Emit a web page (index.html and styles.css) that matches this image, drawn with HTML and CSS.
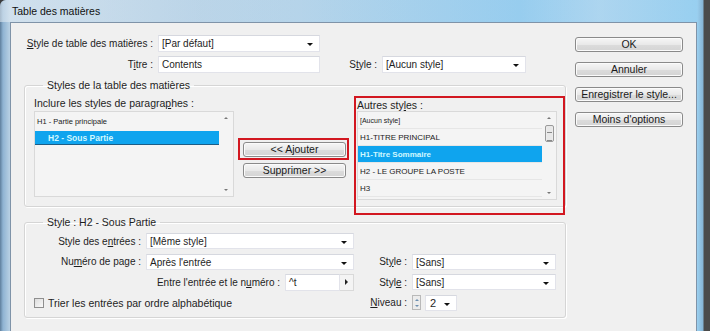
FILE: index.html
```html
<!doctype html>
<html lang="fr">
<head>
	<meta charset="UTF-8">
	<title>Table des matières</title>
	<link rel="stylesheet" href="styles.css">
</head>
<body>
<div class="window">
	<div class="titlebar">Table des matières</div>
	<div class="client">
		<div class="main">
			<div class="row">
				<label class="lbl w-first"><u>S</u>tyle de table des matières :</label>
				<div class="select w-top">[Par défaut]<i class="arrow"></i></div>
			</div>
			<div class="row">
				<label class="lbl w-first">T<u>i</u>tre :</label>
				<div class="input w-top">Contents</div>
				<label class="lbl w-style">S<u>t</u>yle :</label>
				<div class="select w-style-sel">[Aucun style]<i class="arrow"></i></div>
			</div>

			<fieldset class="group group-one">
				<legend>Styles de la table des matières</legend>
				<div class="cols">
					<div class="col-left">
						<div class="caption">Inclure les styles de paragra<u>p</u>hes :</div>
						<div class="listbox left-list">
							<ul>
								<li>H1 - Partie principale</li>
								<li class="sel indent">H2 - Sous Partie</li>
							</ul>
							<div class="scroll">
								<span class="up"></span>
								<span class="down"></span>
							</div>
						</div>
					</div>
					<div class="col-mid">
						<div class="redbox add-box">
							<a href="javascript:;" class="btn">&lt;&lt; Ajouter</a>
						</div>
						<a href="javascript:;" class="btn">Supprimer &gt;&gt;</a>
					</div>
					<div class="redbox col-right">
						<div class="caption">Autres sty<u>l</u>es :</div>
						<div class="listbox right-list">
							<ul>
								<li class="tiny">[Aucun style]</li>
								<li>H1-TITRE PRINCIPAL</li>
								<li class="sel">H1-Titre Sommaire</li>
								<li>H2 - LE GROUPE LA POSTE</li>
								<li>H3</li>
							</ul>
							<div class="scroll">
								<span class="up"></span>
								<span class="thumb"></span>
								<span class="down"></span>
							</div>
						</div>
					</div>
				</div>
			</fieldset>

			<fieldset class="group group-two">
				<legend>Style : H2 - Sous Partie</legend>
				<div class="grid">
					<label class="lbl">Style des e<u>n</u>trées :</label>
					<div class="select">[Même style]<i class="arrow"></i></div>
					<span></span>
					<span></span>

					<label class="lbl">Nu<u>m</u>éro de page :</label>
					<div class="select">Après l'entrée<i class="arrow"></i></div>
					<label class="lbl">St<u>y</u>le :</label>
					<div class="select">[Sans]<i class="arrow"></i></div>

					<div class="between">
						<label class="lbl">Entre l'entrée et le n<u>u</u>méro :</label>
						<div class="input sep">^t</div>
						<a href="javascript:;" class="flyout"><i></i></a>
					</div>
					<label class="lbl">Styl<u>e</u> :</label>
					<div class="select">[Sans]<i class="arrow"></i></div>

					<div class="check">
						<span class="box"></span>Trier les entrées par ordre alphabétique
					</div>
					<label class="lbl"><u>N</u>iveau :</label>
					<div class="level">
						<span class="spin"><b class="s-up"></b><b class="s-down"></b></span>
						<div class="select lvl">2<i class="arrow"></i></div>
					</div>
				</div>
			</fieldset>
		</div>

		<div class="side">
			<a href="javascript:;" class="btn">OK</a>
			<a href="javascript:;" class="btn">Annuler</a>
			<a href="javascript:;" class="btn">Enregistrer le style...</a>
			<a href="javascript:;" class="btn">Moins d'options</a>
		</div>
	</div>
</div>
</body>
</html>
```

FILE: styles.css
```css
*{
	margin: 0;
	padding: 0;
	box-sizing: border-box;
}
ul {
	list-style: none;
}
u {
	text-decoration: underline;
}
body {
	font-family: "Liberation Sans", Arial, sans-serif;
	font-size: 10px;
	color: #1e1e1e;
	background: #3c3c3c;
}

.window {
	width: 710px;
	height: 331px;
	overflow: hidden;
	background: linear-gradient(90deg, #5f7f9c 0, #8fb3d2 3px, #b9d1e4 10px, #b7d3e8 300px, #9ccdee 520px, #9bd0f0 697px, #86b4d4 703px, #4a4a4a 704px);
	border-top-left-radius: 6px;
}
.titlebar {
	height: 22px;
	line-height: 22px;
	padding-left: 12px;
	font-size: 10.5px;
	color: #111;
	background: linear-gradient(90deg, rgba(230,238,245,.55) 0, rgba(200,222,238,.2) 200px, rgba(140,205,240,.3) 520px, rgba(190,220,240,.5) 600px, rgba(140,205,240,.2) 697px, transparent 697px);
}
.client {
	display: flex;
	width: 687px;
	height: 309px;
	margin-left: 10px;
	padding: 12px 13px 0 13px;
	background: #f0f0f0;
	border: 1px solid #7f93a8;
	border-bottom: 0;
}

.main {
	width: 543px;
}
.side {
	display: flex;
	flex-direction: column;
	gap: 10px;
	margin-left: 9px;
	padding-top: 2px;
}
.side .btn {
	width: 108px;
	height: 15px;
}

.row {
	display: flex;
	align-items: center;
	height: 17px;
	margin-bottom: 4px;
}
.lbl {
	text-align: right;
	white-space: nowrap;
	padding-right: 5px;
}
.w-first {
	width: 134px;
}
.w-top {
	width: 162px;
}
.w-style {
	width: 62px;
}
.w-style-sel {
	width: 144px;
}

.select, .input {
	position: relative;
	height: 17px;
	line-height: 16px;
	padding-left: 3px;
	background: #fff;
	border: 1px solid #e2e3ea;
	border-top-color: #d6d8df;
	white-space: nowrap;
}
.arrow {
	position: absolute;
	right: 6px;
	top: 7px;
	border-left: 3px solid transparent;
	border-right: 3px solid transparent;
	border-top: 3px solid #111;
}

.btn {
	display: block;
	height: 15px;
	line-height: 13px;
	text-align: center;
	color: #1a1a1a;
	text-decoration: none;
	font-size: 10.5px;
	border: 1px solid #8a8a8a;
	border-radius: 3px;
	background: linear-gradient(#f6f6f6, #e9e9e9 50%, #dcdcdc 51%, #d4d4d4);
	box-shadow: inset 0 0 0 1px #fbfbfb;
}

.group {
	border: 1px solid #d5d5d5;
	border-radius: 3px;
	box-shadow: inset 1px 1px 0 #fff, 1px 1px 0 #fff;
}
.group legend {
	margin-left: 9px;
	padding: 0 4px;
	font-size: 10.5px;
}
.group-one {
	height: 128px;
	margin-top: 6px;
	padding: 0 0 0 9px;
}
.cols {
	display: flex;
}
.caption {
	height: 14px;
	line-height: 12px;
	font-size: 10.5px;
}
.col-left {
	width: 200px;
	padding-top: 6px;
}
.listbox {
	position: relative;
	background: #f4f4f4;
	border: 1px solid #d9d9d9;
}
.listbox li {
	height: 17px;
	line-height: 17px;
	padding-left: 2px;
	font-size: 8px;
	color: #222;
	white-space: nowrap;
}
.left-list {
	height: 86px;
	padding-right: 14px;
}
.left-list ul {
	padding-top: 4px;
}
.left-list li {
	height: 15px;
	line-height: 11px;
	font-size: 7.5px;
}
.left-list li.sel {
	height: 14px;
	line-height: 14px;
	font-size: 8.5px;
	border-bottom: 1px solid #1c5d86;
}
.listbox li.sel {
	background: #0fa4ee;
	color: #cff8ff;
	font-weight: bold;
}
.listbox li.indent {
	padding-left: 13px;
}
.listbox li.tiny {
	font-size: 7px;
}
.scroll {
	position: absolute;
	right: 1px;
	top: 1px;
	bottom: 1px;
	width: 12px;
	display: flex;
	flex-direction: column;
	justify-content: space-between;
	align-items: center;
}
.up, .down {
	display: block;
	margin: 4px 0;
	border-left: 2px solid transparent;
	border-right: 2px solid transparent;
}
.up {
	border-bottom: 2px solid #777;
}
.down {
	border-top: 2px solid #777;
}

.col-mid {
	width: 120px;
	padding: 47px 0 0 4px;
}
.col-mid .btn {
	width: 103px;
	margin-left: 5px;
}
.add-box {
	width: 111px;
	height: 22px;
	padding: 2px 0 0 3px;
	margin-bottom: 3px;
}
.add-box .btn {
	margin-left: 0;
}
.redbox {
	border: 2px solid #d21720;
}
.col-right {
	width: 211px;
	height: 119px;
	margin-top: 5px;
	margin-bottom: -8px;
	padding: 1px 6px 0 1px;
}
.col-right .caption {
	height: 12px;
}
.right-list {
	height: 89px;
	padding-right: 14px;
}
.right-list li {
	border-bottom: 1px solid #e6e6e6;
}
.right-list .scroll {
	justify-content: flex-start;
}
.right-list .down {
	margin-top: auto;
}
.thumb {
	display: block;
	width: 9px;
	height: 17px;
	margin-top: 2px;
	border: 1px solid #9a9a9a;
	border-radius: 2px;
	background: repeating-linear-gradient(#e8e8e8 0, #e8e8e8 6px, #888 6px, #888 7px, #e8e8e8 7px, #e8e8e8 8px) center / 5px 100% no-repeat, #ececec;
}

.group-two {
	height: 102px;
	margin-top: 9px;
	padding: 3px 0 0 9px;
}
.grid {
	display: grid;
	grid-template-columns: 112px 208px 58px 144px;
	grid-auto-rows: 20.5px;
	align-items: center;
	column-gap: 0;
}
.grid .select {
	height: 16px;
	line-height: 15px;
}
.between {
	grid-column: 1 / 3;
	display: flex;
	justify-content: flex-end;
	align-items: center;
}
.between .input {
	width: 55px;
	height: 17px;
}
.flyout {
	display: flex;
	align-items: center;
	justify-content: center;
	width: 14px;
	height: 17px;
	background: #f4f4f4;
	border: 1px solid #d9d9d9;
	border-left: 0;
}
.flyout i {
	border-top: 3px solid transparent;
	border-bottom: 3px solid transparent;
	border-left: 3px solid #222;
}
.check {
	grid-column: 1 / 3;
	display: flex;
	align-items: center;
	font-size: 10.5px;
}
.box {
	width: 10px;
	height: 10px;
	margin-right: 4px;
	border: 1px solid #8f8f8f;
	background: linear-gradient(135deg, #dcdcdc, #fafafa);
}
.level {
	display: flex;
	align-items: center;
}
.spin {
	display: flex;
	flex-direction: column;
	width: 9px;
	height: 15px;
	margin-right: 4px;
	border: 1px solid #b9b9b9;
	background: #ececec;
}
.spin b {
	flex: 1;
	display: flex;
	align-items: center;
	justify-content: center;
}
.s-up::after, .s-down::after {
	content: "";
	border-left: 2px solid transparent;
	border-right: 2px solid transparent;
}
.s-up::after {
	border-bottom: 2px solid #6d8fb0;
}
.s-down::after {
	border-top: 2px solid #6d8fb0;
}
.select.lvl {
	width: 32px;
	padding-left: 4px;
	font-size: 11px;
}
```
